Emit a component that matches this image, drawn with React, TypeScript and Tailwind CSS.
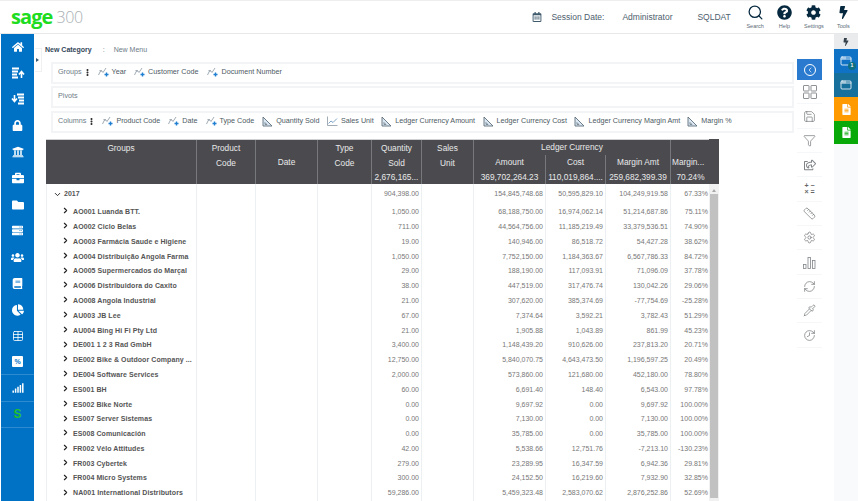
import React from "react";
import { FaHome, FaUniversity, FaBriefcase, FaFolder, FaUsers, FaChartPie, FaSignal, FaQuestionCircle, FaCog, FaBolt, FaBook, FaLock, FaServer, FaRegCalendarAlt, FaFileAlt, FaEllipsisV, FaRegShareSquare } from "react-icons/fa";
import { Search, Save, Filter, Ruler, Settings, RefreshCw, Pipette, History, ChevronLeft, ChevronRight, ChevronDown, AppWindow, Table } from "lucide-react";

const cols = "grid-cols-[151px_59px_62px_54px_50px_52px_72px_60px_65px_39px]";

const rows: string[][] = [
  ["AO001 Luanda BTT.", "1,050.00", "68,188,750.00", "16,974,062.14", "51,214,687.86", "75.11%"],
  ["AO002 Ciclo Belas", "711.00", "44,564,756.00", "11,185,219.49", "33,379,536.51", "74.90%"],
  ["AO003 Farmácia Saude e Higiene", "19.00", "140,946.00", "86,518.72", "54,427.28", "38.62%"],
  ["AO004 Distribuição Angola Farma", "1,050.00", "7,752,150.00", "1,184,363.67", "6,567,786.33", "84.72%"],
  ["AO005 Supermercados do Marçal", "29.00", "188,190.00", "117,093.91", "71,096.09", "37.78%"],
  ["AO006 Distribuidora do Caxito", "38.00", "447,519.00", "317,476.74", "130,042.26", "29.06%"],
  ["AO008 Angola Industrial", "21.00", "307,620.00", "385,374.69", "-77,754.69", "-25.28%"],
  ["AU003 JB Lee", "67.00", "7,374.64", "3,592.21", "3,782.43", "51.29%"],
  ["AU004 Bing Hi Fi Pty Ltd", "21.00", "1,905.88", "1,043.89", "861.99", "45.23%"],
  ["DE001 1 2 3 Rad GmbH", "3,400.00", "1,148,439.20", "910,626.00", "237,813.20", "20.71%"],
  ["DE002 Bike & Outdoor Company ...", "12,750.00", "5,840,070.75", "4,643,473.50", "1,196,597.25", "20.49%"],
  ["DE004 Software Services", "2,000.00", "573,860.00", "121,680.00", "452,180.00", "78.80%"],
  ["ES001 BH", "60.00", "6,691.40", "148.40", "6,543.00", "97.78%"],
  ["ES002 Bike Norte", "0.00", "9,697.92", "0.00", "9,697.92", "100.00%"],
  ["ES007 Server Sistemas", "0.00", "7,130.00", "0.00", "7,130.00", "100.00%"],
  ["ES008 Comunicación", "0.00", "35,785.00", "0.00", "35,785.00", "100.00%"],
  ["FR002 Vélo Attitudes", "42.00", "5,538.66", "12,751.76", "-7,213.10", "-130.23%"],
  ["FR003 Cybertek", "279.00", "23,289.95", "16,347.59", "6,942.36", "29.81%"],
  ["FR004 Micro Systems", "300.00", "24,152.50", "16,219.60", "7,932.90", "32.85%"],
  ["NA001 International Distributors", "59,286.00", "5,459,323.48", "2,583,070.62", "2,876,252.86", "52.69%"],
];

const Dim = () => (
  <svg width="11" height="10" viewBox="0 0 11 10" className="shrink-0" fill="none">
    <path d="M0.5 8 L3 3 L5 5.5 L8 1" stroke="#8a97a3" strokeWidth="0.8" />
    <path d="M1.5 3 L3.5 5" stroke="#8a97a3" strokeWidth="0.8" />
    <path d="M6.5 7.5h4M8.5 5.5v4" stroke="#1f7fd0" strokeWidth="1.4" />
  </svg>
);
const Measure = () => (
  <svg width="11" height="11" viewBox="0 0 11 11" className="shrink-0" fill="none">
    <path d="M1 1 L10 10 H1 Z" stroke="#5e6f7c" strokeWidth="0.9" fill="#dbe8f3" />
    <path d="M3 6.5 L5 8.5 H3 Z" stroke="#5e6f7c" strokeWidth="0.7" fill="#fff" />
  </svg>
);
const Line = () => (
  <svg width="11" height="10" viewBox="0 0 11 10" className="shrink-0" fill="none">
    <path d="M0.5 0.5 V9.5 H10.5" stroke="#8a97a3" strokeWidth="0.8" />
    <path d="M1.5 7.5 L4 5 L6 6.5 L10 2.5" stroke="#5e8fb8" strokeWidth="0.8" />
  </svg>
);

const ListUp = ({ flip }: { flip?: boolean }) => (
  <svg width="14" height="13" viewBox="0 0 14 13" fill="none" className={flip ? "-scale-x-100" : ""}>
    <path d="M1 1.5h7M1 4.5h6M1 7.5h5M1 10.5h6" stroke="#fff" strokeWidth="2" />
    <path d={flip ? "M10.5 2v6M8 5.5l2.5 3 2.5-3" : "M10.5 11V5M8 7.5l2.5-3 2.5 3"} stroke="#fff" strokeWidth="1.6" />
  </svg>
);

const Grid4 = () => (
  <svg width="14" height="14" viewBox="0 0 14 14" fill="none" stroke="#808488" strokeWidth="0.9">
    <rect x="0.5" y="0.5" width="5.5" height="5.5" rx="0.5" />
    <rect x="8" y="0.5" width="5.5" height="5.5" rx="0.5" />
    <rect x="0.5" y="8" width="5.5" height="5.5" rx="0.5" />
    <rect x="8" y="8" width="5.5" height="5.5" rx="0.5" />
  </svg>
);
const Bars = () => (
  <svg width="13" height="13" viewBox="0 0 13 13" fill="none" stroke="#808488" strokeWidth="0.8">
    <rect x="0.5" y="8.5" width="2.5" height="4" />
    <rect x="5" y="1.5" width="2.5" height="11" />
    <rect x="9.5" y="4.5" width="2.5" height="8" />
  </svg>
);

const Field = ({ icon, label, className = "" }: { icon: React.ReactNode; label: string; className?: string }) => (
  <span className={`flex items-center gap-[3px] whitespace-nowrap ${className}`}>
    {icon}
    <span>{label}</span>
  </span>
);

const Panel = ({ children }: { children: React.ReactNode }) => (
  <div className="flex h-[22px] items-center border-2 border-[#f2f4f5] pb-[1px] pl-[5px] text-[7.2px] text-[#4d5a63]">{children}</div>
);

const side: { icon: React.ReactNode; line?: boolean }[] = [
  { icon: <FaHome size={12} /> },
  { icon: <ListUp /> },
  { icon: <ListUp flip /> },
  { icon: <FaLock size={11} /> },
  { icon: <FaUniversity size={12} /> },
  { icon: <FaBriefcase size={12} /> },
  { icon: <FaFolder size={12} /> },
  { icon: <FaServer size={11} /> },
  { icon: <FaUsers size={13} /> },
  { icon: <FaBook size={11} /> },
  { icon: <FaChartPie size={12} /> },
  { icon: <Table size={12} strokeWidth={1.6} /> },
  { icon: <span className="flex h-[11px] w-[11px] items-center justify-center rounded-[1px] bg-white text-[7px] font-bold leading-none text-[#0072c6]">%</span>, line: true },
  { icon: <FaSignal size={12} />, line: true },
  { icon: <span className="text-[12px] font-bold text-[#22c02c]">S</span>, line: true },
];

const iconCls = { size: 13, strokeWidth: 1.1 };
const tools: React.ReactNode[] = [
  <Grid4 />,
  <Save {...iconCls} />,
  <Filter {...iconCls} />,
  <FaRegShareSquare size={12} className="text-[#808488]" />,
  <span className="grid grid-cols-2 gap-x-[2px] text-center text-[7px] font-bold leading-[6px] text-[#666]">
    <span>+</span><span>−</span><span>×</span><span>=</span>
  </span>,
  <Ruler {...iconCls} />,
  <Settings {...iconCls} />,
  <Bars />,
  <RefreshCw {...iconCls} />,
  <Pipette {...iconCls} />,
  <History {...iconCls} className="-scale-x-100" />,
];

const HeadBtn = ({ icon, label }: { icon: React.ReactNode; label: string }) => (
  <div className="flex w-[29.4px] flex-col items-center text-[5.5px] text-[#5b6b76]">
    <div className="flex h-[18px] items-center text-[#06293f]">{icon}</div>
    <span className="mt-[1px] whitespace-nowrap">{label}</span>
  </div>
);

const Th = ({ children, className = "" }: { children?: React.ReactNode; className?: string }) => (
  <div className={`flex items-center justify-center overflow-hidden whitespace-nowrap ${className}`}>{children}</div>
);

const stack = "row-span-3 flex-col justify-start border-r border-[#77787b] leading-[14.5px] pt-[1px]";

export default function App() {
  return (
    <div className="flex h-[501px] w-[858px] flex-col overflow-hidden bg-white font-['Liberation_Sans',Arial,sans-serif]">
      <header className="flex h-[34px] shrink-0 items-center border-y border-t-[#eeeeee] border-b-[#e6e8ea] pl-[11px]">
        <span className="font-['Open_Sans',sans-serif] text-[20px] font-bold leading-none tracking-[-0.9px] text-[#20dc1e]">sage</span>
        <span className="ml-[4px] font-['Open_Sans',sans-serif] text-[16px] font-light leading-none tracking-[-0.4px] text-[#a9afb3]">300</span>
        <div className="ml-auto flex items-center text-[8.5px] text-[#4d606d]">
          <FaRegCalendarAlt size={10} className="text-[#3f5a6b]" />
          <span className="ml-[9px] w-[71px]">Session Date:</span>
          <span className="w-[75px]">Administrator</span>
          <span className="w-[43px]">SQLDAT</span>
        </div>
        <div className="flex">
          <HeadBtn icon={<Search size={17} strokeWidth={1.8} />} label="Search" />
          <HeadBtn icon={<FaQuestionCircle size={15} />} label="Help" />
          <HeadBtn icon={<FaCog size={15} />} label="Settings" />
          <HeadBtn icon={<FaBolt size={13} />} label="Tools" />
        </div>
      </header>

      <div className="flex min-h-0 flex-1">
        <nav className="ml-[1px] flex w-[33px] shrink-0 flex-col bg-[#0072c6] text-white">
          {side.map((s, i) => (
            <div key={i} className={`flex h-[26.25px] shrink-0 items-center justify-center ${s.line ? "border-b border-[#2f8bd0]" : ""}`}>
              {s.icon}
            </div>
          ))}
        </nav>

        <main className="relative min-w-0 flex-1 pl-[12px] pt-[11px]">
          <div className="absolute left-[1px] top-[14px] flex h-[24px] w-[7px] items-center border border-l-0 border-[#eef0f1]">
            <span className="ml-[1px] h-0 w-0 border-y-[2.5px] border-l-[3px] border-y-transparent border-l-[#3c5a70]" />
          </div>
          <div className="-ml-[1px] flex h-[8px] items-center text-[7px] leading-none text-[#6d7c87]">
            <span className="font-bold text-[#33475a]">New Category</span>
            <span className="ml-[11px]">:</span>
            <span className="ml-[9px]">New Menu</span>
          </div>
          <div className="ml-[5px] mt-[9px] flex w-[743px] flex-col gap-[2px]">
            <Panel>
              <span className="text-[#6d7c87]">Groups</span>
              <FaEllipsisV size={7} className="ml-[2px] text-[#333]" />
              <Field className="ml-[7px]" icon={<Dim />} label="Year" />
              <Field className="ml-[8px]" icon={<Dim />} label="Customer Code" />
              <Field className="ml-[9px]" icon={<Dim />} label="Document Number" />
            </Panel>
            <Panel><span className="text-[#6d7c87]">Pivots</span></Panel>
            <div className="mt-[1px]">
              <Panel>
                <span className="text-[#6d7c87]">Columns</span>
                <FaEllipsisV size={7} className="ml-[2px] text-[#333]" />
                <Field className="ml-[7px]" icon={<Dim />} label="Product Code" />
                <Field className="ml-[8px]" icon={<Dim />} label="Date" />
                <Field className="ml-[8px]" icon={<Dim />} label="Type Code" />
                <Field className="ml-[8px]" icon={<Measure />} label="Quantity Sold" />
                <Field className="ml-[7.5px]" icon={<Line />} label="Sales Unit" />
                <Field className="ml-[7.5px]" icon={<Measure />} label="Ledger Currency Amount" />
                <Field className="ml-[7.5px]" icon={<Measure />} label="Ledger Currency Cost" />
                <Field className="ml-[7.5px]" icon={<Measure />} label="Ledger Currency Margin Amt" />
                <Field className="ml-[7px]" icon={<Measure />} label="Margin %" />
              </Panel>
            </div>
          </div>

          <div className="relative mt-[6px] w-[673px]">
            <div className={`grid ${cols} grid-rows-[15px_15px_14px] border-t border-[#cfd1d3] bg-[#4b4b4f] text-[8.3px] text-[#e9e9ea]`}>
              <Th className={stack}><span>Groups</span></Th>
              <Th className={stack}><span>Product</span><span>Code</span></Th>
              <Th className="row-span-3 border-r border-[#77787b]">Date</Th>
              <Th className={stack}><span>Type</span><span>Code</span></Th>
              <Th className={stack}>
                <span>Quantity</span><span>Sold</span><span>2,676,165...</span>
              </Th>
              <Th className={stack}><span>Sales</span><span>Unit</span></Th>
              <Th className="col-span-3 border-r border-[#77787b]">Ledger Currency</Th>
              <div className="relative col-start-10 row-span-2 row-start-1 flex h-full flex-col">
                <div className="h-[15px]" />
                <div className="w-[48px] overflow-hidden bg-[#4b4b4f] pl-[1px] leading-[15px] whitespace-nowrap">Margin...</div>
              </div>
              <Th className="col-start-7 row-start-2 border-r border-[#77787b]">Amount</Th>
              <Th className="col-start-8 row-start-2 border-r border-[#77787b]">Cost</Th>
              <Th className="col-start-9 row-start-2 border-r border-[#77787b]">Margin Amt</Th>
              <Th className="col-start-7 row-start-3 border-r border-[#77787b]">369,702,264.23</Th>
              <Th className="col-start-8 row-start-3 border-r border-[#77787b]">110,019,864....</Th>
              <Th className="col-start-9 row-start-3 border-r border-[#77787b]">259,682,399.39</Th>
              <Th className="col-start-10 row-start-3">70.24%</Th>
            </div>
            <div className="absolute right-0 top-0 h-[30px] w-[10px] bg-[#4b4b4f]" />

            <div className="absolute right-0 top-[45px] flex h-[320px] w-[10px] flex-col items-center bg-[#f1f1f1]">
              <span className="mt-[5px] h-0 w-0 border-x-[2.5px] border-b-[3px] border-x-transparent border-b-[#a9a9a9]" />
              <div className="mt-[2px] h-[304px] w-[8px] bg-[#c1c1c1]" />
            </div>

            <div className="text-[7px] text-[#777777]">
              <div className={`grid h-[21px] ${cols} items-center`}>
                <div className="flex h-full items-center border-x border-[#edf0f3] pl-[6px] font-bold text-[#555]">
                  <ChevronDown size={9} strokeWidth={2.5} className="mr-[2px] text-[#222]" />2017
                </div>
                {[0, 1, 2].map((k) => <div key={k} className="h-full border-r border-[#edf0f3]" />)}
                <div className="flex h-full items-center justify-end border-r border-[#edf0f3] pr-[2px]">904,398.00</div>
                <div className="h-full border-r border-[#edf0f3]" />
                <div className="flex h-full items-center justify-end border-r border-[#edf0f3] pr-[2px]">154,845,748.68</div>
                <div className="flex h-full items-center justify-end border-r border-[#edf0f3] pr-[2px]">50,595,829.10</div>
                <div className="flex h-full items-center justify-end border-r border-[#edf0f3] pr-[2px]">104,249,919.58</div>
                <div className="flex h-full items-center justify-end pr-[2px]">67.33%</div>
              </div>
              {rows.map((r) => (
                <div key={r[0]} className={`grid h-[14.8px] ${cols} items-center`}>
                  <div className="flex h-full items-center whitespace-nowrap border-x border-[#edf0f3] pl-[14px] font-bold tracking-[0.08px] text-[#555]">
                    <ChevronRight size={9} strokeWidth={3} className="-mt-[3px] mr-[3px] shrink-0 text-[#222]" />{r[0]}
                  </div>
                  {[0, 1, 2].map((k) => <div key={k} className="h-full border-r border-[#edf0f3]" />)}
                  <div className="flex h-full items-center justify-end border-r border-[#edf0f3] pr-[2px]">{r[1]}</div>
                  <div className="h-full border-r border-[#edf0f3]" />
                  <div className="flex h-full items-center justify-end border-r border-[#edf0f3] pr-[2px]">{r[2]}</div>
                  <div className="flex h-full items-center justify-end border-r border-[#edf0f3] pr-[2px]">{r[3]}</div>
                  <div className="flex h-full items-center justify-end border-r border-[#edf0f3] pr-[2px]">{r[4]}</div>
                  <div className="flex h-full items-center justify-end whitespace-nowrap pr-[2px]">{r[5]}</div>
                </div>
              ))}
            </div>
          </div>
        </main>

        <aside className="ml-[4px] flex w-[25px] shrink-0 flex-col pt-[25px]">
          <div className="flex h-[21px] items-center justify-center bg-[#2a7bd0] text-white">
            <span className="flex h-[12px] w-[12px] items-center justify-center rounded-full border border-white">
              <ChevronLeft size={8} strokeWidth={2} />
            </span>
          </div>
          {tools.map((t, i) => (
            <div key={i} className="flex h-[24.35px] items-center justify-center border-b border-[#f6f7f8] text-[#5b5f62]">
              {t}
            </div>
          ))}
        </aside>

        <aside className="ml-[12px] flex w-[24px] shrink-0 flex-col bg-[#f9fafb]">
          <div className="flex h-[15px] items-center justify-center bg-[#e9ebec] text-[#35424b]"><FaBolt size={8} /></div>
          <div className="relative flex h-[24px] items-center justify-center bg-[#0f72c5] text-white">
            <AppWindow size={12} strokeWidth={1.6} />
            <span className="absolute bottom-[3px] right-[2px] flex h-[8px] w-[8px] items-center justify-center rounded-full bg-[#0f6f83] text-[5px] font-bold">1</span>
          </div>
          <div className="flex h-[24px] items-center justify-center bg-[#176f9c] text-white"><AppWindow size={12} strokeWidth={1.6} /></div>
          <div className="flex h-[24px] items-center justify-center bg-[#ff9a00] text-white"><FaFileAlt size={11} /></div>
          <div className="flex h-[23px] items-center justify-center bg-[#08a908] text-white"><FaFileAlt size={11} /></div>
        </aside>
      </div>
    </div>
  );
}
